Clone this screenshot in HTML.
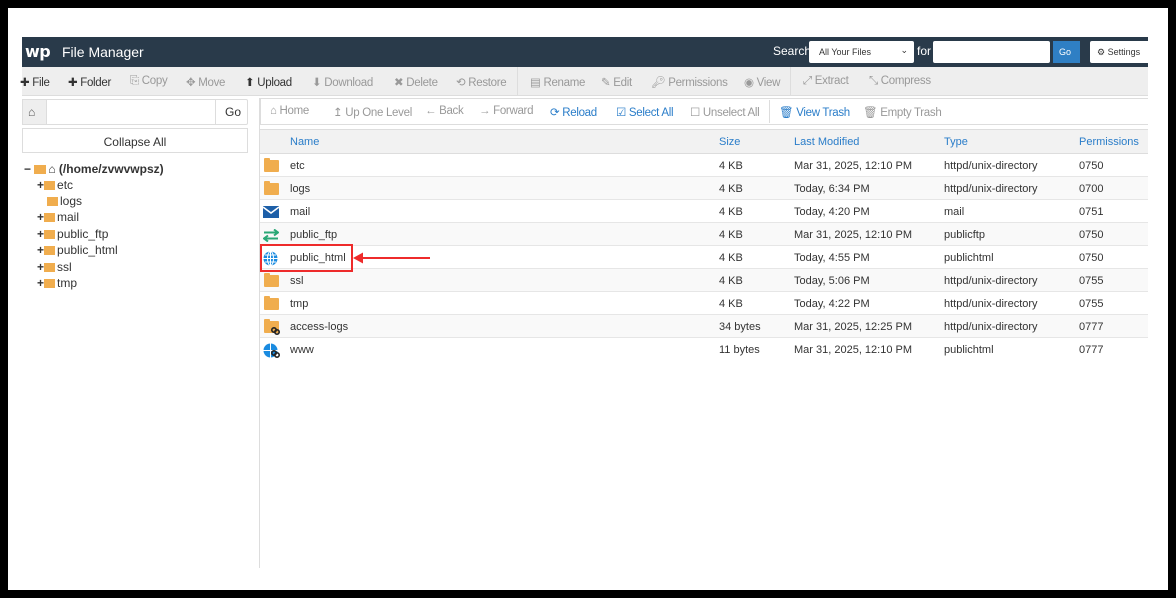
<!DOCTYPE html>
<html><head><meta charset="utf-8"><style>
*{box-sizing:border-box;margin:0;padding:0}
body{width:1176px;height:598px;background:#000;position:relative;overflow:hidden;font-family:"Liberation Sans",sans-serif;font-size:12px;color:#333}
.page{position:absolute;left:8px;top:8px;width:1160px;height:582px;background:#fff}
.a{position:absolute;white-space:nowrap}
.hdr{position:absolute;left:22px;top:37px;width:1126px;height:30px;background:#293a4a}
.tb{position:absolute;left:22px;top:67px;width:1126px;height:29px;background:#eee;border-bottom:1px solid #ddd}
.tb span{position:absolute;top:8px;font-size:11.5px;letter-spacing:-0.3px;color:#999}
.tb span.on{color:#333}
.nav span{position:absolute;top:105px;font-size:11.5px;letter-spacing:-0.3px;color:#999}
.nav span.bl{color:#2a7dc9}
.th{position:absolute;left:260px;top:129px;width:888px;height:25px;background:#f2f2f2;border-top:1px solid #ddd;border-bottom:1px solid #ddd}
.th span{position:absolute;top:6px;color:#2a7dc9;font-size:11px}
.row{position:absolute;left:260px;width:888px;height:23px;border-bottom:1px solid #e6e6e6}
.row span{position:absolute;top:6px;font-size:11px;color:#333}
.fold{position:absolute;left:4px;top:6px;width:15px;height:12px;background:#f0ad4e;border-radius:1px}
.fold:before{content:"";position:absolute;left:0;top:-2px;width:6px;height:3px;background:#f0ad4e;border-radius:1px 1px 0 0}
.tr{position:absolute;font-size:12px;color:#333}
.tf{display:inline-block;width:11px;height:9px;background:#f0ad4e;margin-right:2px;vertical-align:-1px}
.lnk{position:absolute;left:11px;top:12px;width:9px;height:8px}
</style></head><body>
<div class="page"></div>
<div class="hdr">
<span class="a" style="left:3px;top:5px;color:#fff;font-weight:bold;font-size:16px;font-family:'DejaVu Sans',sans-serif;letter-spacing:-0.5px">wp</span>
<span class="a" style="left:40px;top:7px;color:#fff;font-size:14px">File Manager</span>
<span class="a" style="left:751px;top:7px;color:#fff;font-size:12px">Search</span>
<div class="a" style="left:787px;top:4px;width:105px;height:22px;background:#fff;border-radius:2px;font-size:9px;padding:6px 10px;color:#333">All Your Files<span style="position:absolute;right:6px;top:4px;font-size:9px">⌄</span></div>
<span class="a" style="left:895px;top:7px;color:#fff;font-size:12px">for</span>
<div class="a" style="left:911px;top:4px;width:117px;height:22px;background:#fff;border-radius:2px"></div>
<div class="a" style="left:1031px;top:4px;width:27px;height:22px;background:#2f7fc4;color:#fff;font-size:9px;padding:6px 6px">Go</div>
<div class="a" style="left:1068px;top:4px;width:60px;height:22px;background:#fff;border-radius:2px;font-size:9px;padding:6px 7px;color:#333">⚙ Settings</div>
</div>
<div class="tb">
<span class="on" style="left:-2px">✚ File</span>
<span class="on" style="left:46px">✚ Folder</span>
<span style="left:108px">⎘ Copy</span>
<span style="left:164px">✥ Move</span>
<span class="on" style="left:223px">⬆ Upload</span>
<span style="left:290px">⬇ Download</span>
<span style="left:372px">✖ Delete</span>
<span style="left:434px">⟲ Restore</span>
<span style="left:495px;top:0;height:29px;width:1px;background:#ddd"></span>
<span style="left:508px">▤ Rename</span>
<span style="left:579px">✎ Edit</span>
<span style="left:629px">🔑︎ Permissions</span>
<span style="left:722px">◉ View</span>
<span style="left:768px;top:0;height:29px;width:1px;background:#ddd"></span>
<span style="left:781px">⤢ Extract</span>
<span style="left:847px">⤡ Compress</span>
</div>
<div class="a" style="left:22px;top:99px;width:226px;height:26px;border:1px solid #ddd;border-radius:2px"></div>
<div class="a" style="left:22px;top:99px;width:25px;height:26px;background:#eee;border:1px solid #ddd;font-size:12px;padding:5px 5px;color:#555">⌂</div>
<div class="a" style="left:215px;top:99px;width:33px;height:26px;border-left:1px solid #ddd;padding:6px 9px;font-size:12px">Go</div>
<div class="a" style="left:22px;top:128px;width:226px;height:25px;border:1px solid #ddd;text-align:center;padding-top:6px;font-size:12px">Collapse All</div>
<div class="tr" style="left:24px;top:162px;font-weight:bold">− <span class="tf" style="width:12px"></span>⌂ (/home/zvwvwpsz)</div>
<div class="tr" style="left:37px;top:178px"><b>+</b><span class="tf"></span>etc</div>
<div class="tr" style="left:47px;top:194px"><span class="tf"></span>logs</div>
<div class="tr" style="left:37px;top:210px"><b>+</b><span class="tf"></span>mail</div>
<div class="tr" style="left:37px;top:227px"><b>+</b><span class="tf"></span>public_ftp</div>
<div class="tr" style="left:37px;top:243px"><b>+</b><span class="tf"></span>public_html</div>
<div class="tr" style="left:37px;top:260px"><b>+</b><span class="tf"></span>ssl</div>
<div class="tr" style="left:37px;top:276px"><b>+</b><span class="tf"></span>tmp</div>
<div class="a" style="left:259px;top:98px;width:1px;height:470px;background:#ddd"></div>
<div class="a" style="left:260px;top:98px;width:888px;height:27px;border:1px solid #ddd;border-right:none"></div>
<div class="nav">
<span style="left:270px">⌂ Home</span>
<span style="left:333px">↥ Up One Level</span>
<span style="left:425px">← Back</span>
<span style="left:479px">→ Forward</span>
<span class="bl" style="left:550px">⟳ Reload</span>
<span class="bl" style="left:616px">☑ Select All</span>
<span style="left:690px">☐ Unselect All</span>
<span style="left:769px;top:100px;height:23px;width:1px;background:#ddd"></span>
<span class="bl" style="left:779px">🗑︎ View Trash</span>
<span style="left:863px">🗑︎ Empty Trash</span>
</div>
<div class="th"><span style="left:30px">Name</span><span style="left:459px">Size</span><span style="left:534px">Last Modified</span><span style="left:684px">Type</span><span style="left:819px">Permissions</span></div>

<div class="row" style="top:154px;background:#fff"><div class="fold"></div><span style="left:30px">etc</span><span style="left:459px">4 KB</span><span style="left:534px">Mar 31, 2025, 12:10 PM</span><span style="left:684px">httpd/unix-directory</span><span style="left:819px">0750</span></div>
<div class="row" style="top:177px;background:#f9f9f9"><div class="fold"></div><span style="left:30px">logs</span><span style="left:459px">4 KB</span><span style="left:534px">Today, 6:34 PM</span><span style="left:684px">httpd/unix-directory</span><span style="left:819px">0700</span></div>
<div class="row" style="top:200px;background:#fff"><svg class="a" style="left:3px;top:6px" width="16" height="12"><rect width="16" height="12" fill="#1d5fa8"/><path d="M0 1 L8 7 L16 1" stroke="#fff" stroke-width="1.5" fill="none"/></svg><span style="left:30px">mail</span><span style="left:459px">4 KB</span><span style="left:534px">Today, 4:20 PM</span><span style="left:684px">mail</span><span style="left:819px">0751</span></div>
<div class="row" style="top:223px;background:#f9f9f9"><svg class="a" style="left:3px;top:6px" width="16" height="13"><path d="M1 3.5H15M11 0.5L15 3.5L11 6.5M15 9.5H1M5 6.5L1 9.5L5 12.5" stroke="#2aa876" stroke-width="2" fill="none"/></svg><span style="left:30px">public_ftp</span><span style="left:459px">4 KB</span><span style="left:534px">Mar 31, 2025, 12:10 PM</span><span style="left:684px">publicftp</span><span style="left:819px">0750</span></div>
<div class="row" style="top:246px;background:#fff"><svg class="a" style="left:3px;top:5px" width="15" height="15"><circle cx="7.5" cy="7.5" r="7" fill="#1a8be0"/><path d="M0.5 7.5H14.5M7.5 0.5V14.5M2 4H13M2 11H13" stroke="#fff" stroke-width="1"/><ellipse cx="7.5" cy="7.5" rx="3" ry="7" stroke="#fff" fill="none"/></svg><span style="left:30px">public_html</span><span style="left:459px">4 KB</span><span style="left:534px">Today, 4:55 PM</span><span style="left:684px">publichtml</span><span style="left:819px">0750</span></div>
<div class="row" style="top:269px;background:#f9f9f9"><div class="fold"></div><span style="left:30px">ssl</span><span style="left:459px">4 KB</span><span style="left:534px">Today, 5:06 PM</span><span style="left:684px">httpd/unix-directory</span><span style="left:819px">0755</span></div>
<div class="row" style="top:292px;background:#fff"><div class="fold"></div><span style="left:30px">tmp</span><span style="left:459px">4 KB</span><span style="left:534px">Today, 4:22 PM</span><span style="left:684px">httpd/unix-directory</span><span style="left:819px">0755</span></div>
<div class="row" style="top:315px;background:#f9f9f9"><div class="fold"></div><svg class="lnk" viewBox="0 0 9 8"><circle cx="3" cy="3" r="2.2" stroke="#222" stroke-width="1.6" fill="none"/><circle cx="6" cy="5" r="2.2" stroke="#222" stroke-width="1.6" fill="none"/></svg><span style="left:30px">access-logs</span><span style="left:459px">34 bytes</span><span style="left:534px">Mar 31, 2025, 12:25 PM</span><span style="left:684px">httpd/unix-directory</span><span style="left:819px">0777</span></div>
<div class="row" style="top:338px;background:#fff;border-bottom:none"><svg class="a" style="left:3px;top:5px" width="15" height="15"><circle cx="7.5" cy="7.5" r="7" fill="#1a8be0"/><path d="M0.5 7.5H14.5M7.5 0.5V14.5" stroke="#fff"/></svg><svg class="lnk" viewBox="0 0 9 8"><circle cx="3" cy="3" r="2.2" stroke="#222" stroke-width="1.6" fill="none"/><circle cx="6" cy="5" r="2.2" stroke="#222" stroke-width="1.6" fill="none"/></svg><span style="left:30px">www</span><span style="left:459px">11 bytes</span><span style="left:534px">Mar 31, 2025, 12:10 PM</span><span style="left:684px">publichtml</span><span style="left:819px">0777</span></div>

<div class="a" style="left:260px;top:244px;width:93px;height:28px;border:2px solid #ee2b2b"></div>
<svg class="a" style="left:352px;top:251px" width="80" height="14"><path d="M3 7H78" stroke="#ee2b2b" stroke-width="2"/><path d="M1 7L11 1.5V12.5Z" fill="#ee2b2b"/></svg>
</body></html>
